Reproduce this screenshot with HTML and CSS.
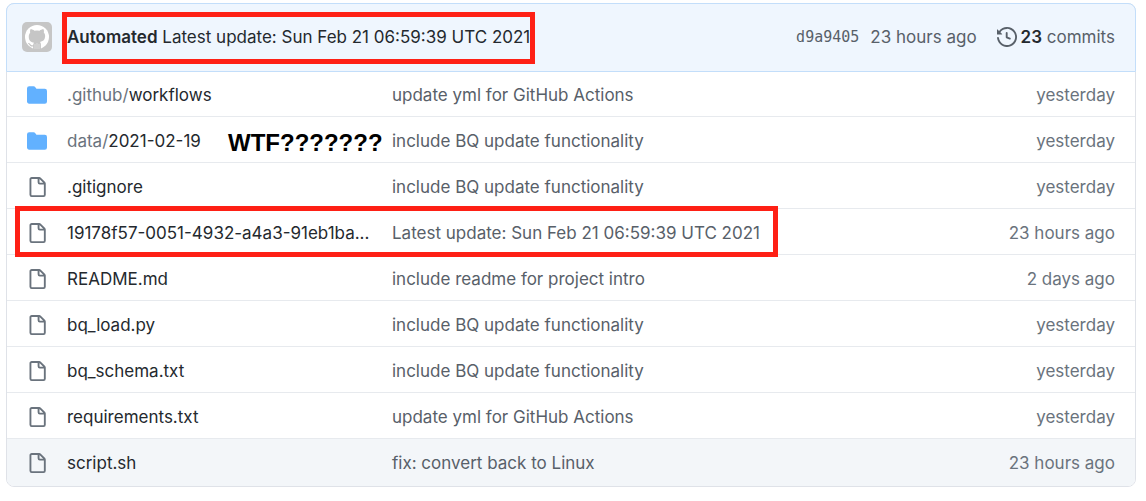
FILE: index.html
```html
<!DOCTYPE html>
<html lang="en">
<head>
<meta charset="utf-8">
<title>Repository files</title>
<link rel="stylesheet" href="styles.css">
</head>
<body>
<svg class="sprite" aria-hidden="true">
  <symbol id="folder" viewBox="0 0 16 16"><path d="M1.75 1A1.75 1.75 0 000 2.75v10.5C0 14.216.784 15 1.75 15h12.5A1.75 1.75 0 0016 13.25v-8.5A1.75 1.75 0 0014.25 3h-6.5a.25.25 0 01-.2-.1l-.9-1.2c-.33-.44-.85-.7-1.4-.7h-3.5z"/></symbol>
  <symbol id="file" viewBox="0 0 16 16"><path fill-rule="evenodd" d="M3.75 1.5a.25.25 0 00-.25.25v12.5c0 .138.112.25.25.25h9.5a.25.25 0 00.25-.25V6H10.25A1.75 1.75 0 018.5 4.25V1.5H3.75zm6.25.06v2.69c0 .138.112.25.25.25h2.69L10 1.56zM2 1.75C2 .784 2.784 0 3.75 0h6.086c.464 0 .909.184 1.237.513l3.414 3.414c.329.328.513.773.513 1.237v9.086A1.75 1.75 0 0113.25 16h-9.5A1.75 1.75 0 012 14.25V1.75z"/></symbol>
</svg>
<main class="files">
  <header class="commit-bar">
    <svg class="avatar" viewBox="0 0 30 30" role="img" aria-label="Automated">
      <rect width="30" height="30" rx="5" fill="#c6c6c6"/>
      <circle cx="15" cy="15" r="12" fill="#fff"/>
      <path fill="#c6c6c6" d="M8.400 7.300c1.500-.1 2.900.6 4 1.400q2.600-.6 5.200 0c1.100-.8 2.500-1.500 4-1.400q.7 1.700.2 3.300c1.100 1.200 1.500 2.500 1.300 4.200-.3 3.400-2.300 4.700-5.100 5.100.6.700.9 1.500.9 2.400v4.700h-7.800v-2.500c-2.100.4-3-.2-3.800-1.700-.4-.8-.8-1.200-1.500-1.600.9-.4 1.800 0 2.400.9.700 1.100 1.500 1.500 2.900 1.100.1-1.300.4-1.900 1-2.500-2.900-.4-5.100-1.700-5.300-5.200-.2-1.900.3-3.300 1.400-4.900q-.5-1.600.2-3.300z"/>
      <path d="M13 22v5M15 21v6M17 22v5" stroke="#fff" stroke-opacity=".45" stroke-width=".8"/>
    </svg>
    <p class="summary"><a class="author" href="#author">Automated</a> <a href="#commit">Latest update: Sun Feb 21 06:59:39 UTC 2021</a><span class="outline"></span></p>
    <a class="hash" href="#commit">d9a9405</a>
    <time class="when">23 hours ago</time>
    <a class="history" href="#commits">
      <svg class="icon" viewBox="0 0 16 16" aria-hidden="true"><path fill="currentColor" fill-rule="evenodd" d="M1.643 3.143L.427 1.927A.25.25 0 000 2.104V5.750c0 .138.112.25.25.25h3.646a.25.25 0 00.177-.427L2.715 4.215a6.500 6.500 0 11-1.180 4.458.75.75 0 10-1.493.154 8.001 8.001 0 101.600-5.684zM7.750 4a.75.75 0 01.75.75v2.992l2.028.812a.75.75 0 01-.557 1.392l-2.500-1A.75.75 0 017 8.250v-3.500A.75.75 0 017.750 4z"/></svg>
      <span><strong>23</strong> commits</span>
    </a>
  </header>
  <table class="list">
    <colgroup><col class="col-icon"><col class="col-name"><col><col class="col-age"></colgroup>
    <tbody>
      <tr><td><svg class="icon folder"><use href="#folder"/></svg></td><td class="name"><a href="#f1"><span class="parent">.github/</span>workflows</a></td><td><a href="#c1">update yml for GitHub Actions</a></td><td class="age">yesterday</td></tr>
      <tr><td><svg class="icon folder"><use href="#folder"/></svg></td><td class="name noted"><a href="#f2"><span class="parent">data/</span>2021-02-19</a><span class="note">WTF???????</span></td><td><a href="#c2">include BQ update functionality</a></td><td class="age">yesterday</td></tr>
      <tr><td><svg class="icon"><use href="#file"/></svg></td><td class="name"><a href="#f3">.gitignore</a></td><td><a href="#c2">include BQ update functionality</a></td><td class="age">yesterday</td></tr>
      <tr class="marked-row"><td><svg class="icon"><use href="#file"/></svg><span class="outline"></span></td><td class="name"><a href="#f4">19178f57-0051-4932-a4a3-91eb1ba...</a></td><td><a href="#commit">Latest update: Sun Feb 21 06:59:39 UTC 2021</a></td><td class="age">23 hours ago</td></tr>
      <tr><td><svg class="icon"><use href="#file"/></svg></td><td class="name"><a href="#f5">README.md</a></td><td><a href="#c3">include readme for project intro</a></td><td class="age">2 days ago</td></tr>
      <tr><td><svg class="icon"><use href="#file"/></svg></td><td class="name"><a href="#f6">bq_load.py</a></td><td><a href="#c2">include BQ update functionality</a></td><td class="age">yesterday</td></tr>
      <tr><td><svg class="icon"><use href="#file"/></svg></td><td class="name"><a href="#f7">bq_schema.txt</a></td><td><a href="#c2">include BQ update functionality</a></td><td class="age">yesterday</td></tr>
      <tr><td><svg class="icon"><use href="#file"/></svg></td><td class="name"><a href="#f8">requirements.txt</a></td><td><a href="#c1">update yml for GitHub Actions</a></td><td class="age">yesterday</td></tr>
      <tr class="hovered"><td><svg class="icon"><use href="#file"/></svg></td><td class="name"><a href="#f9">script.sh</a></td><td><a href="#c4">fix: convert back to Linux</a></td><td class="age">23 hours ago</td></tr>
    </tbody>
  </table>
</main>
</body>
</html>
```
FILE: styles.css
```css
* { box-sizing: border-box; }
body {
  margin: 3px 10px 14px 6px;
  background: #fff;
  color: #586069;
  font: 17px/24px Inter, "Liberation Sans", sans-serif;
}
a { color: inherit; text-decoration: none; }
.sprite { display: none; }
.files {
  border: 1px solid #dfe2e8;
  border-radius: 8px;
}
.commit-bar {
  display: flex;
  align-items: center;
  margin: -1px -1px 0;
  padding: 18px 20px 19px 15px;
  border: 1px solid #c3defa;
  border-radius: 8px 8px 0 0;
  background: #eff6fe;
  white-space: nowrap;
}
.avatar { width: 30px; height: 30px; flex: none; }
.summary {
  position: relative;
  margin: 0 auto 0 15px;
  color: #24292e;
}
.outline {
  position: absolute;
  border: 5px solid #fe2015;
  pointer-events: none;
}
.summary .outline {
  inset: -13px -5px -15px;
}
.author, .history strong { font-weight: 600; color: #24292e; }
.hash {
  margin-right: 11px;
  font: 15px/24px "DejaVu Sans Mono", monospace;
}
.when { margin-right: 20px; }
.history { display: flex; align-items: center; gap: 4px; }
.icon { display: block; width: 20px; height: 20px; fill: #6a737d; }
.history .icon { color: #586069; }
.folder { fill: #62b1ff; }
.list {
  width: 100%;
  table-layout: fixed;
  border-collapse: separate;
  border-spacing: 0;
}
.col-icon { width: 60px; }
.col-name { width: 325px; }
.col-age { width: 160px; }
td {
  height: 46px;
  padding: 2px 0 0;
  border-bottom: 1px solid #e7eaee;
  white-space: nowrap;
}
tr:first-child td { height: 45px; }
td:first-child { padding-left: 20px; }
.name { color: #24292e; }
.parent { color: #6a737d; }
.age { padding-right: 20px; text-align: right; color: #6a737d; }
.noted, .marked-row { position: relative; }
.note {
  position: absolute;
  left: 161px;
  top: 12px;
  color: #000;
  font: bold 24px/28px "Liberation Sans", sans-serif;
}
.marked-row .outline {
  left: 8px;
  top: -3px;
  width: 763px;
  height: 51px;
}
.hovered td { height: 47px; padding-top: 0; border-bottom: 0; background: #f3f6f9; }
.hovered td:first-child { border-bottom-left-radius: 7px; }
.hovered td:last-child { border-bottom-right-radius: 7px; }
```
